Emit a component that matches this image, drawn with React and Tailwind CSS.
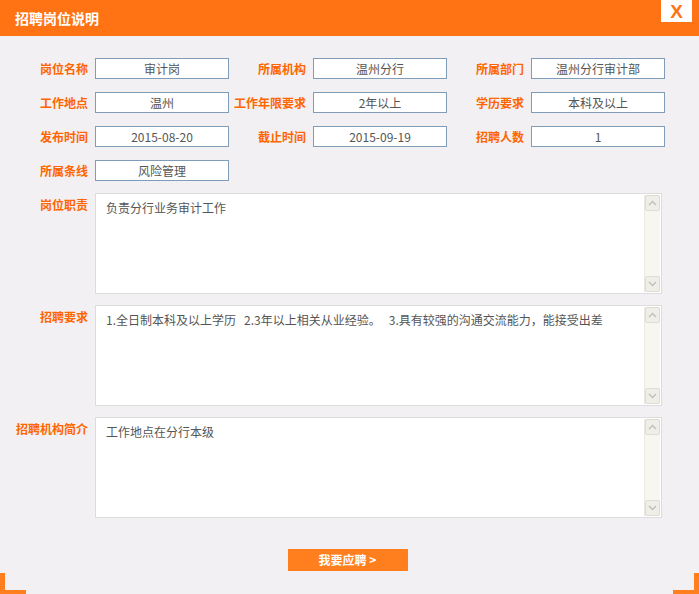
import React from 'react';

const font = { fontFamily: '"Noto Sans CJK SC", "Liberation Sans", sans-serif' };

const rows = [
  [['岗位名称', '审计岗'], ['所属机构', '温州分行'], ['所属部门', '温州分行审计部']],
  [['工作地点', '温州'], ['工作年限要求', '2年以上'], ['学历要求', '本科及以上']],
  [['发布时间', '2015-08-20'], ['截止时间', '2015-09-19'], ['招聘人数', '1']],
  [['所属条线', '风险管理']],
];

const areas = [
  ['岗位职责', '负责分行业务审计工作'],
  ['招聘要求', '1.全日制本科及以上学历   2.3年以上相关从业经验。   3.具有较强的沟通交流能力，能接受出差'],
  ['招聘机构简介', '工作地点在分行本级'],
];

function Field({ value }) {
  return (
    <div className="ml-[7px] h-[21px] w-[134px] border border-[#7f9db9] bg-white text-center text-[12px] leading-[19px] text-[#555]">
      {value}
    </div>
  );
}

function Scrollbar() {
  return (
    <div className="absolute right-[1px] top-[1px] bottom-[1px] flex w-[16px] flex-col justify-between border-l border-[#ebe9e2] bg-[#f7f6f1]">
      <div className="flex h-[16px] items-center justify-center rounded-[2px] border border-[#dedcd2] bg-[#efeee8]">
        <svg width="9" height="6" viewBox="0 0 9 6"><path d="M1 5 L4.5 1.5 L8 5" fill="none" stroke="#c2c0b8" strokeWidth="1.5" /></svg>
      </div>
      <div className="flex h-[16px] items-center justify-center rounded-[2px] border border-[#dedcd2] bg-[#efeee8]">
        <svg width="9" height="6" viewBox="0 0 9 6"><path d="M1 1 L4.5 4.5 L8 1" fill="none" stroke="#c2c0b8" strokeWidth="1.5" /></svg>
      </div>
    </div>
  );
}

export default function App() {
  return (
    <div className="relative h-[594px] w-[699px] overflow-hidden bg-[#f2f0f2]" style={font}>
      {/* header */}
      <div className="relative flex h-[36px] items-center bg-[#ff7314] pl-[15px]">
        <span className="text-[14px] font-bold text-white">招聘岗位说明</span>
        <div className="absolute right-[7px] top-0 flex h-[22px] w-[31px] items-center justify-center bg-white">
          <span className="text-[19px] font-bold leading-none text-[#ff7314]" style={{ fontFamily: '"Liberation Sans", sans-serif' }}>X</span>
        </div>
      </div>

      {/* fields */}
      <div className="flex flex-col gap-[13px] pt-[22px]">
        {rows.map((row, i) => (
          <div key={i} className="flex items-center">
            {row.map(([label, value], j) => (
              <div key={j} className="flex items-center">
                <div className={`${j === 0 ? 'w-[88px]' : 'w-[77px]'} text-right text-[12px] font-bold text-[#ff6600]`}>{label}</div>
                <Field value={value} />
              </div>
            ))}
          </div>
        ))}
      </div>

      {/* text areas */}
      <div className="mt-[12px] flex flex-col gap-[11px]">
        {areas.map(([label, text], i) => (
          <div key={i} className="flex items-start">
            <div className="w-[88px] pt-[3px] text-right text-[12px] font-bold text-[#ff6600]">{label}</div>
            <div className="relative ml-[7px] h-[101px] w-[567px] border border-[#dddbdd] bg-white">
              <div className="pl-[10px] pr-[24px] pt-[6px] text-[12px] leading-[16px] text-[#555] whitespace-pre">{text}</div>
              <Scrollbar />
            </div>
          </div>
        ))}
      </div>

      {/* apply button */}
      <div className="mt-[31px] flex justify-center">
        <button className="ml-[-4px] h-[22px] w-[120px] bg-[#ff7f1f] text-[12px] font-bold text-white">我要应聘 &gt;</button>
      </div>

      {/* corner marks */}
      <div className="absolute bottom-0 left-0 h-[21px] w-[5px] bg-[#ff7f1f]" />
      <div className="absolute bottom-0 left-0 h-[4px] w-[26px] bg-[#ff7f1f]" />
      <div className="absolute bottom-0 right-0 h-[21px] w-[5px] bg-[#ff7f1f]" />
      <div className="absolute bottom-0 right-0 h-[4px] w-[26px] bg-[#ff7f1f]" />
    </div>
  );
}
